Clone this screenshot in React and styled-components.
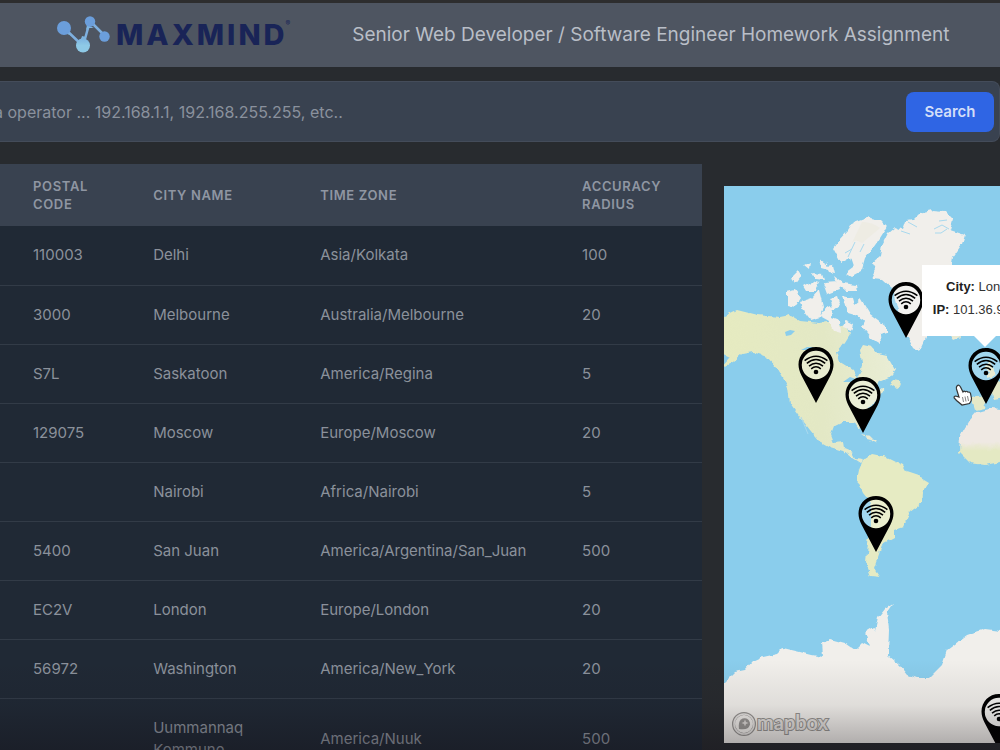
import React from "react";
import styled, { createGlobalStyle } from "styled-components";

const GlobalStyle = createGlobalStyle`
  *, *::before, *::after { box-sizing: border-box; }
  body {
    margin: 0;
    overflow: hidden;
    background: #282b2f;
    font-family: Inter, "Liberation Sans", sans-serif;
  }
`;

const Page = styled.div`
  position: relative;
  display: flex;
  flex-direction: column;
  height: 100vh;
  overflow: hidden;
`;

const Header = styled.header`
  display: flex;
  align-items: center;
  gap: 62px;
  flex: none;
  height: 67px;
  padding: 0 16px 0 56px;
  background: #4e5561;
  border-top: 3px solid #2d2d2e;
`;

const Brand = styled.a`
  display: flex;
  align-items: center;
  gap: 6px;
  color: #192457;
  text-decoration: none;
`;

const BrandName = styled.span`
  font-size: 29px;
  line-height: 32px;
  font-weight: 800;
  letter-spacing: 3px;
`;

const Registered = styled.sup`
  align-self: flex-start;
  margin-left: -8px;
  font-size: 7px;
  line-height: 16px;
`;

const Title = styled.h1`
  margin: 0;
  color: #b9bec7;
  font-size: 19px;
  line-height: 28px;
  font-weight: 400;
  white-space: nowrap;
`;

const SearchBar = styled.form`
  display: flex;
  align-items: center;
  flex: none;
  height: 61px;
  margin-top: 14px;
  padding-right: 5px;
  background: #394250;
  border: 1px solid #444c5a;
  border-left: 0;
  border-radius: 0 8px 8px 0;
`;

const SearchInput = styled.input`
  flex: 1;
  min-width: 0;
  height: 40px;
  padding: 0;
  border: 0;
  outline: 0;
  background: transparent;
  text-indent: -6px;
  font: 400 16px/24px Inter, "Liberation Sans", sans-serif;
  &::placeholder { color: #8a919d; opacity: 1; }
`;

const SearchButton = styled.button`
  width: 88px;
  height: 40px;
  border: 0;
  border-radius: 8px;
  background: #2f65e4;
  color: #d3def8;
  font: 600 15px/24px Inter, "Liberation Sans", sans-serif;
`;

const Content = styled.main`
  display: grid;
  grid-template-columns: minmax(0, 702fr) minmax(0, 276fr);
  gap: 22px;
  flex: 1;
  min-height: 0;
  padding-top: 22px;
`;

const TablePane = styled.section`
  min-height: 0;
  overflow: hidden;
`;

const Table = styled.table`
  width: 100%;
  table-layout: fixed;
  border-collapse: collapse;
  background: #202935;
  color: #8b919b;
  text-align: left;
`;

const Col = styled.col`
  width: ${(p) => p.$w};
`;

const HeadCell = styled.th`
  height: 62px;
  padding: 0 24px;
  background: #394250;
  color: #8f96a2;
  font-size: 13px;
  line-height: 18px;
  font-weight: 600;
  letter-spacing: 0.05em;
  text-transform: uppercase;
  &:first-child { padding-left: 33px; }
`;

const Row = styled.tr`
  border-bottom: 1px solid #323b47;
`;

const Cell = styled.td`
  height: 59px;
  padding: 18px 24px;
  font-size: 15px;
  line-height: 22px;
  &:first-child { padding-left: 33px; }
`;

const MapPane = styled.section`
  position: relative;
  margin: 22px 0 7px;
  overflow: hidden;
  background: #8acdec;
  font-family: "Liberation Sans", Arial, sans-serif;
`;

const MapArt = styled.svg`
  display: block;
  width: 100%;
  height: 100%;
`;

const Pin = styled.button`
  position: absolute;
  left: ${(p) => p.$x}px;
  top: ${(p) => p.$y}px;
  width: 36px;
  height: 56px;
  padding: 0;
  border: 0;
  background: none;
  svg { display: block; }
`;

const Popup = styled.div`
  position: absolute;
  left: 198px;
  top: 79px;
  width: 124px;
  height: 71px;
  padding: 10px 8px;
  background: #fff;
  color: #333;
  font-size: 13px;
  line-height: 23px;
  text-align: center;
  white-space: nowrap;
  &::after {
    content: "";
    position: absolute;
    left: 52px;
    top: 71px;
    border: 11px solid transparent;
    border-top-color: #fff;
    border-bottom: 0;
  }
  p { margin: 0; }
  b { color: #222; }
`;

const Cursor = styled.svg`
  position: absolute;
  left: 229px;
  top: 198px;
`;

const Attribution = styled.a`
  position: absolute;
  left: 7px;
  bottom: 2px;
`;

const Shade = styled.div`
  position: absolute;
  inset: auto 0 0 0;
  height: 90px;
  pointer-events: none;
  background: linear-gradient(rgba(16, 10, 16, 0), rgba(16, 10, 16, 0.08) 50%, rgba(16, 10, 16, 0.32));
`;

const rows = [
  ["110003", "Delhi", "Asia/Kolkata", "100"],
  ["3000", "Melbourne", "Australia/Melbourne", "20"],
  ["S7L", "Saskatoon", "America/Regina", "5"],
  ["129075", "Moscow", "Europe/Moscow", "20"],
  ["", "Nairobi", "Africa/Nairobi", "5"],
  ["5400", "San Juan", "America/Argentina/San_Juan", "500"],
  ["EC2V", "London", "Europe/London", "20"],
  ["56972", "Washington", "America/New_York", "20"],
  ["", "Uummannaq Kommune", "America/Nuuk", "500"],
];

const pins = [
  { city: "Uummannaq", x: 164, y: 96 },
  { city: "Saskatoon", x: 74, y: 161 },
  { city: "Washington", x: 121, y: 191 },
  { city: "San Juan", x: 134, y: 310 },
  { city: "London", x: 244, y: 162 },
  { city: "Antarctica", x: 257, y: 508 },
];

function PinIcon() {
  return (
    <svg width="36" height="56" viewBox="0 0 36 56" aria-hidden="true">
      <path
        fillRule="evenodd"
        d="M18 0C8 0 .5 7.800.5 17.500c0 4 1.200 7 3 11L18 56l14.500-27.500c1.800-4 3-7 3-11C35.500 7.800 28 0 18 0ZM18 3.800a14.200 14.200 0 1 1 0 28.400 14.200 14.200 0 0 1 0-28.400Z"
      />
      <circle cx="18" cy="18" r="14.200" fill="#fff" fillOpacity=".2" />
      <circle cx="18" cy="25" r="2.300" />
      <g fill="none" stroke="#000" strokeWidth="1.500">
        <path d="M13.200 21.800q4.800-4 9.600 0M11 19.100q7-5.800 14 0M8.800 16.300q9.200-7.600 18.400 0M6.600 13.600q11.400-8.800 22.800 0" />
      </g>
    </svg>
  );
}

function BrandMark() {
  return (
    <svg width="54" height="38" viewBox="56 16 54 38" aria-hidden="true">
      <defs>
        <linearGradient id="mark" x1="0" y1="0" x2="0" y2="1">
          <stop offset="0" stopColor="#7db3e0" />
          <stop offset=".5" stopColor="#8ec9e6" />
        </linearGradient>
      </defs>
      <path d="M64 28 83 46 90 21 105 36" fill="none" stroke="#7eafdf" strokeWidth="2.500" strokeLinejoin="round" />
      <path d="M77 39q4 2 5-3l4 1q-1 4 2 6ZM68 30l1 4 4 2-6-2ZM87 25l-1 5 3-2 5 0Z" fill="#7eb4df" />
      <g fill="#6b9edb">
        <circle cx="64" cy="28" r="7" />
        <circle cx="90" cy="21.500" r="5.200" />
        <circle cx="104.500" cy="36.500" r="5.200" />
      </g>
      <circle cx="83" cy="45.500" r="7" fill="url(#mark)" />
    </svg>
  );
}

function WorldMap() {
  return (
    <MapArt viewBox="724 186 276 557" preserveAspectRatio="xMinYMin slice" role="img" aria-label="World map">
      <defs>
        <filter id="coast" x="-5%" y="-5%" width="110%" height="110%">
          <feTurbulence type="fractalNoise" baseFrequency=".14" numOctaves="2" seed="4" />
          <feDisplacementMap in="SourceGraphic" scale="5" xChannelSelector="R" yChannelSelector="G" />
        </filter>
        <linearGradient id="america" x1="0" y1="0" x2="1" y2="0">
          <stop offset="0" stopColor="#e6ebc0" />
          <stop offset=".6" stopColor="#e3e8c5" />
          <stop offset="1" stopColor="#e9edd5" />
        </linearGradient>
        <linearGradient id="africa" x1="0" y1="0" x2="0" y2="1">
          <stop offset=".6" stopColor="#efe9e3" />
          <stop offset=".75" stopColor="#e4e9c3" />
        </linearGradient>
      </defs>
      <g filter="url(#coast)">
        <path
          fill="url(#america)"
          d="M715 318 724 316 737 310 757 315 780 317 790 315 800 321 820 323 835 321 846 328 850 334 845 342 837 352 840 362 853 370 857 379 861 372 862 363 860 350 863 345 872 347 878 354 887 356 895 370 889 378 880 382 874 388 884 390 879 398 872 404 863 415 862 427 858 428 854 422 843 422 833 427 830 435 833 443 843 442 844 448 851 451 855 459 863 460 860 463 852 458 843 451 830 447 819 441 810 430 800 417 790 403 788 387 778 369 767 357 753 352 742 354 732 363 722 367 730 358 715 350Z"
        />
        <path fill="#e6ebc3" d="M863 460 872 454 887 457 903 465 907 472 919 476 929 482 923 493 922 503 910 512 903 527 894 530 894 537 883 543 878 557 874 568 880 577 871 576 866 563 868 543 871 525 871 503 863 493 857 480 859 470Z" />
        <path fill="url(#africa)" d="M1010 410 992 408 977 412 970 420 960 437 959 452 970 463 985 465 1000 462 1010 460Z" />
        <path fill="#e5e9c8" d="M971 397 984 395 988 400 984 408 975 410ZM890 384l6-6 5 7-5 3ZM985 367l4-5 4 6 3 8-9 2 2-6ZM990 385l6-4 8 1v16l-10 2Z" />
        <g fill="#f1efeb">
          <path d="M872 263 880 256 882 245 888 233 895 227 903 230 906 221 913 220 920 213 933 210 944 211 953 220 950 230 965 235 962 245 953 258 948 290 945 318 926 337 919 352 913 347 905 333 898 310 892 288 882 279 872 278 876 270Z" />
          <path d="M839 240 848 230 853 222 867 217 880 220 887 227 880 238 873 248 865 258 861 272 852 277 845 273 853 267 850 258 841 263 833 248Z" />
          <path d="M787 292 795 290 801 298 795 307 787 305ZM800 302 812 298 819 290 823 306 820 317 810 320 804 312ZM823 283 838 282 840 289 827 294ZM834 276l9 7 14 2 1 6-12 0-9-7ZM803 286l9-5 7 2-4 8-9 0ZM791 278l7-7 3 5-6 8ZM819 259l8 5 1 6-7-2ZM805 265l6-3-1 7ZM812 273l10 1 2 6-8-1ZM826 266l7-1 2 8-6-1ZM830 298l7-2 3 9-7 5ZM843 296l9 2 2 7 7-6 9 15 16 12 0 7-6 2 1 9-10-6-9-11 3-6-7-5-10-3ZM845 320l8 4-2 7-8-3ZM827 306l6 3-1 8 8 3 1 13-7-2-5-10-9-5Z" />
          <path d="M715 690 724 683 735 672 745 670 752 662 763 657 777 654 783 648 800 652 812 655 823 657 822 642 830 639 845 643 855 650 862 643 870 647 865 632 873 627 875 631 878 617 885 608 893 603 887 612 889 630 888 655 900 665 908 675 917 678 929 678 942 665 947 650 967 635 985 629 1010 632 1010 760 715 760Z" />
        </g>
        <path fill="#e8ead3" d="M948 333l10-1 2 5-7 3ZM861 434l9 2 4 4-7-2ZM870 440h7l-1 3Z" />
      </g>
      <g fill="#8acdec">
        <path d="M785 332l5-2 5 1-4 4-5 1ZM801 350l6-3 8 0-7 3ZM843 382l7-5 9 3-6 2Z" />
      </g>
      <g fill="none" stroke="#a9d9ee" strokeWidth="1">
        <path d="M901 231l9 3M908 222l9 5M934 229l8-4 7 4M935 233l6 0 6-4M947 220l-8 1M860 252l4-8M845 253l7-4M801 417l7 17M848 257l7-15" />
      </g>
      <path d="M862 222q10 0 18 6l-18 15q-7-5-10 0" fill="#ebe9dc" opacity=".5" />
    </MapArt>
  );
}

export default function App() {
  return (
    <>
      <GlobalStyle />
      <Page>
        <Header>
          <Brand href="#" aria-label="MaxMind">
            <BrandMark />
            <BrandName>MAXMIND</BrandName>
            <Registered>®</Registered>
          </Brand>
          <Title>Senior Web Developer / Software Engineer Homework Assignment</Title>
        </Header>

        <SearchBar onSubmit={(e) => e.preventDefault()}>
          <SearchInput
            type="text"
            aria-label="IP addresses"
            placeholder="a operator ... 192.168.1.1, 192.168.255.255, etc.."
          />
          <SearchButton type="submit">Search</SearchButton>
        </SearchBar>

        <Content>
          <TablePane>
            <Table>
              <colgroup>
                <Col $w="18.4%" />
                <Col $w="23.8%" />
                <Col $w="37.3%" />
                <Col $w="20.5%" />
              </colgroup>
              <thead>
                <tr>
                  <HeadCell scope="col">Postal Code</HeadCell>
                  <HeadCell scope="col">City Name</HeadCell>
                  <HeadCell scope="col">Time Zone</HeadCell>
                  <HeadCell scope="col">Accuracy Radius</HeadCell>
                </tr>
              </thead>
              <tbody>
                {rows.map((row) => (
                  <Row key={row[1]}>
                    {row.map((value, i) => (
                      <Cell key={i}>{value}</Cell>
                    ))}
                  </Row>
                ))}
              </tbody>
            </Table>
          </TablePane>

          <MapPane>
            <WorldMap />
            {pins.map((pin) => (
              <Pin key={pin.city} type="button" aria-label={pin.city} $x={pin.x} $y={pin.y}>
                <PinIcon />
              </Pin>
            ))}
            <Popup>
              <p><b>City:</b> London</p>
              <p><b>IP:</b> 101.36.98.114</p>
            </Popup>
            <Cursor width="20" height="22" viewBox="0 0 20 22" aria-hidden="true">
              <path
                d="M4 2Q6 0 7.500 3L10 8q1-1.500 2.500-.200Q14 6.500 15 8.200q2-.700 2.500 1.300l1 5q0 3-2 5L9 21 3.500 16.500 1.200 14q-.5-2 1.500-2L6 13 3.500 5Q3 3 4 2Z"
                fill="#fff"
                stroke="#333"
                strokeWidth="1.200"
              />
              <path d="M9.500 13l1 5M12 12.500l1 5M14.500 12l1 5" stroke="#666" strokeWidth=".8" />
            </Cursor>
            <Attribution href="#" aria-label="Mapbox">
              <svg width="100" height="26" viewBox="0 0 100 26" aria-hidden="true">
                <circle cx="13" cy="13" r="10.500" fill="none" stroke="#959390" strokeWidth="3" />
                <circle cx="13" cy="13" r="10" fill="none" stroke="#e9e7e4" strokeWidth="1.600" />
                <path d="M8 18q-1-7 2-9.500a5.500 5.500 0 1 1 7 8.500q-3 2-9 1Z" fill="#999794" />
                <path d="m14 8.500 1 2.500 2.500 1-2.500 1-1 2.500-1-2.500-2.500-1 2.500-1Z" fill="#dedbd7" />
                <text x="26" y="19" fontFamily="Lato, sans-serif" fontSize="20" fontWeight="700" fill="#e4e1de" stroke="#959390" strokeWidth="2" paintOrder="stroke">
                  mapbox
                </text>
              </svg>
            </Attribution>
          </MapPane>
        </Content>
        <Shade />
      </Page>
    </>
  );
}
